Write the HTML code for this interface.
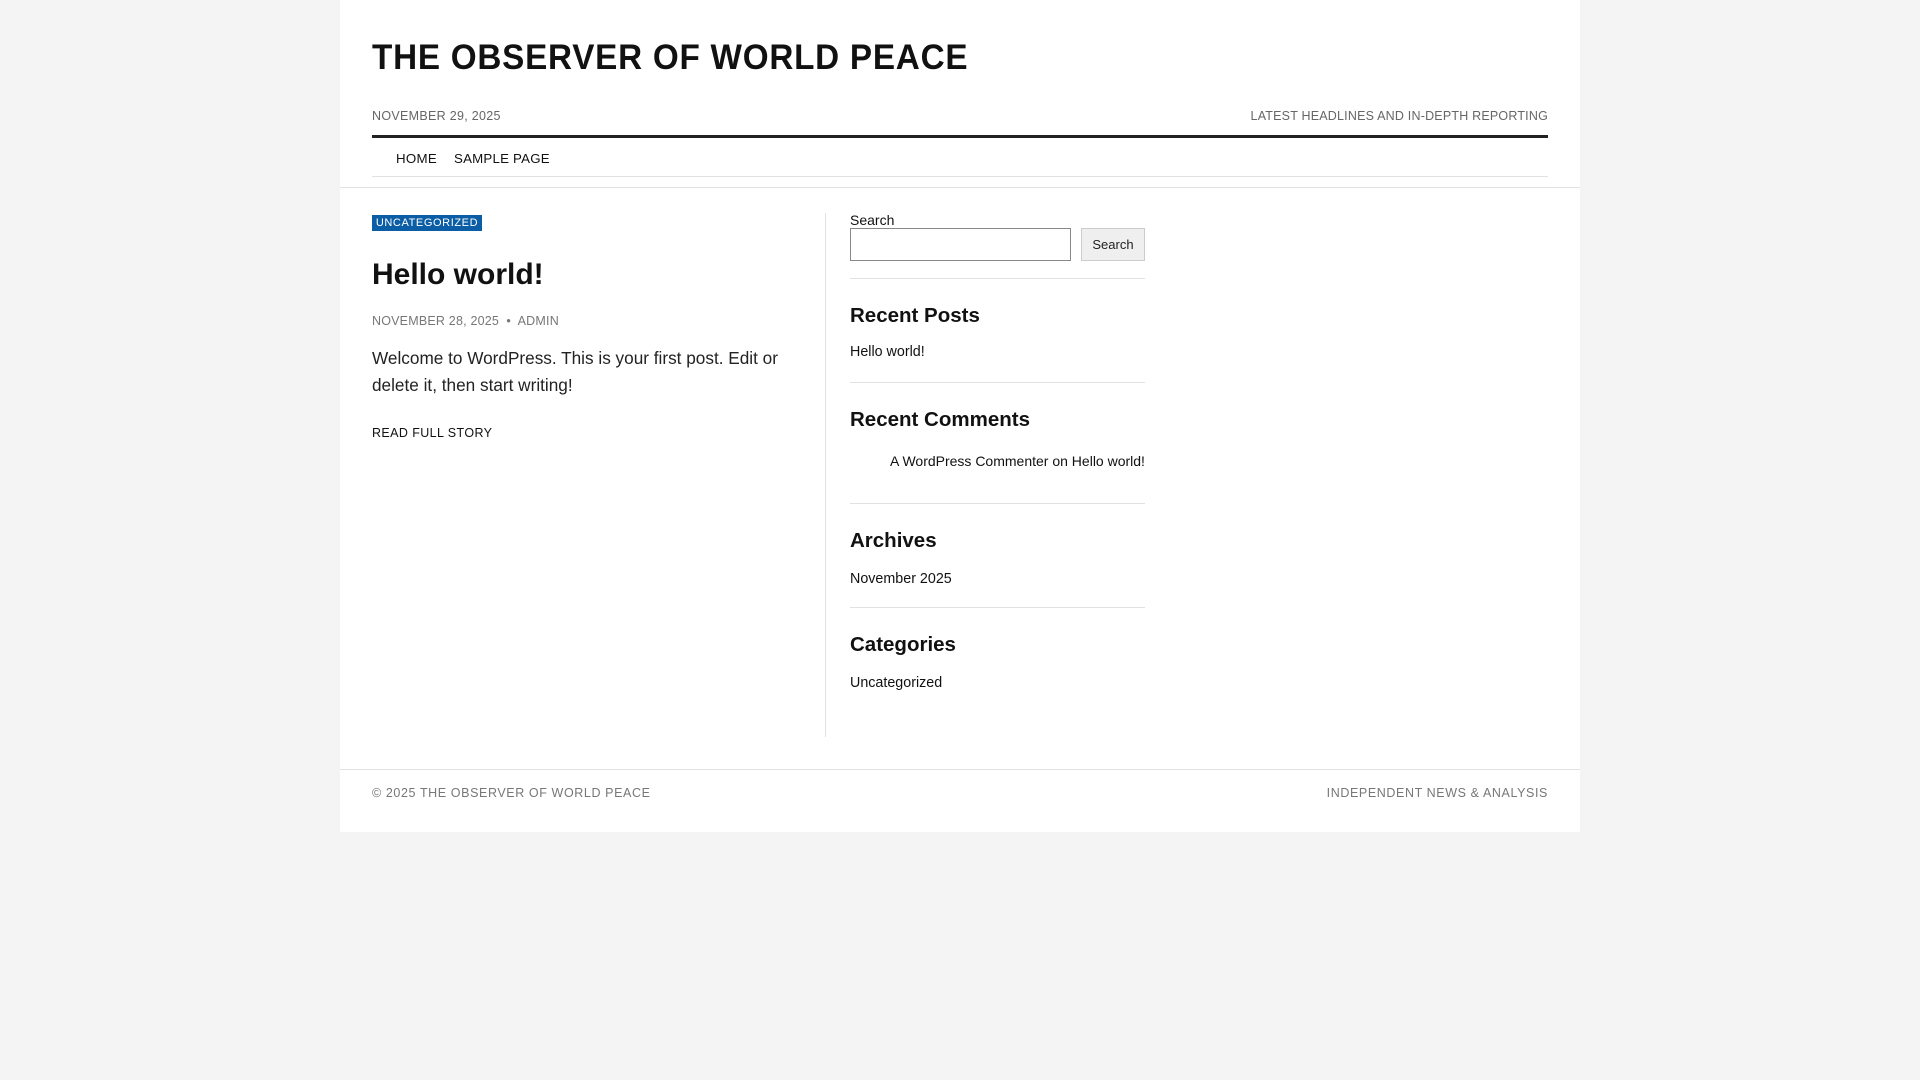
<!DOCTYPE html>
<html><head><meta charset="utf-8"><style>
*{margin:0;padding:0;box-sizing:border-box}
body{width:1920px;height:1080px;background:#f4f4f4;font-family:"Liberation Sans",Arial,sans-serif;color:#111;position:relative;overflow:hidden}
.wrap{position:absolute;left:340px;top:0;width:1240px;height:832px;background:#fff}
.a{position:absolute;white-space:nowrap}
.sm{font-size:12.5px;letter-spacing:.3px;text-transform:uppercase;color:#666}
.hl{position:absolute;height:1px;background:#e2e2e2}
h3{position:absolute;font-size:20.5px;font-weight:bold;white-space:nowrap}
.li{position:absolute;font-size:14.3px;white-space:nowrap;color:#111}
</style></head><body>
<div class="wrap">
<div class="a" style="left:32px;top:38px;font-size:35px;font-weight:bold;letter-spacing:.8px;line-height:40px;color:#111;transform:scaleX(0.95);transform-origin:left">THE OBSERVER OF WORLD PEACE</div>
<div class="a sm" style="left:32px;top:109px">November 29, 2025</div>
<div class="a sm" style="right:32px;top:109px;letter-spacing:.2px">Latest headlines and in-depth reporting</div>
<div style="position:absolute;left:32px;right:32px;top:135px;height:3px;background:#222"></div>
<div class="a" style="left:56px;top:151px;font-size:13.3px;letter-spacing:.3px;color:#111">HOME</div>
<div class="a" style="left:114px;top:151px;font-size:13.3px;letter-spacing:.2px;color:#111">SAMPLE PAGE</div>
<div class="hl" style="left:32px;right:32px;top:176px"></div>
<div class="hl" style="left:0;right:0;top:187px"></div>

<div class="a" style="left:32px;top:215px;width:110px;height:16px;background:#0b5ea6;color:#fff;font-size:11px;letter-spacing:.6px;text-align:center;line-height:16px">UNCATEGORIZED</div>
<div class="a" style="left:32px;top:258px;font-size:30px;font-weight:bold;color:#111">Hello world!</div>
<div class="a sm" style="left:32px;top:314px;color:#777;letter-spacing:.2px">November 28, 2025 &nbsp;•&nbsp; Admin</div>
<div class="a" style="left:32px;top:345px;font-size:17.2px;line-height:27px;color:#222;white-space:normal;width:420px">Welcome to WordPress. This is your first post. Edit or delete it, then start writing!</div>
<div class="a" style="left:32px;top:426px;font-size:12.5px;letter-spacing:.4px;color:#111">READ FULL STORY</div>

<div style="position:absolute;left:485px;top:213px;width:1px;height:524px;background:#e2e2e2"></div>

<div class="li" style="left:510px;top:212px;font-size:14px">Search</div>
<div style="position:absolute;left:510px;top:228px;width:221px;height:33px;border:1px solid #888"></div>
<div style="position:absolute;left:741px;top:228px;width:64px;height:33px;border:1px solid #ccc;background:#efefef;font-size:13px;text-align:center;line-height:31px;color:#222">Search</div>
<div class="hl" style="left:510px;width:295px;top:278px"></div>
<h3 style="left:510px;top:304px">Recent Posts</h3>
<div class="li" style="left:510px;top:344px">Hello world!</div>
<div class="hl" style="left:510px;width:295px;top:382px"></div>
<h3 style="left:510px;top:408px">Recent Comments</h3>
<div class="li" style="left:550px;top:453px;font-size:14px">A WordPress Commenter on Hello world!</div>
<div class="hl" style="left:510px;width:295px;top:503px"></div>
<h3 style="left:510px;top:529px">Archives</h3>
<div class="li" style="left:510px;top:571px">November 2025</div>
<div class="hl" style="left:510px;width:295px;top:607px"></div>
<h3 style="left:510px;top:633px">Categories</h3>
<div class="li" style="left:510px;top:675px">Uncategorized</div>

<div class="hl" style="left:0;right:0;top:769px"></div>
<div class="a sm" style="left:32px;top:786px;color:#777;letter-spacing:.6px">© 2025 The Observer of World Peace</div>
<div class="a sm" style="right:32px;top:786px;color:#777;letter-spacing:.6px">Independent News &amp; Analysis</div>
</div>
</body></html>
